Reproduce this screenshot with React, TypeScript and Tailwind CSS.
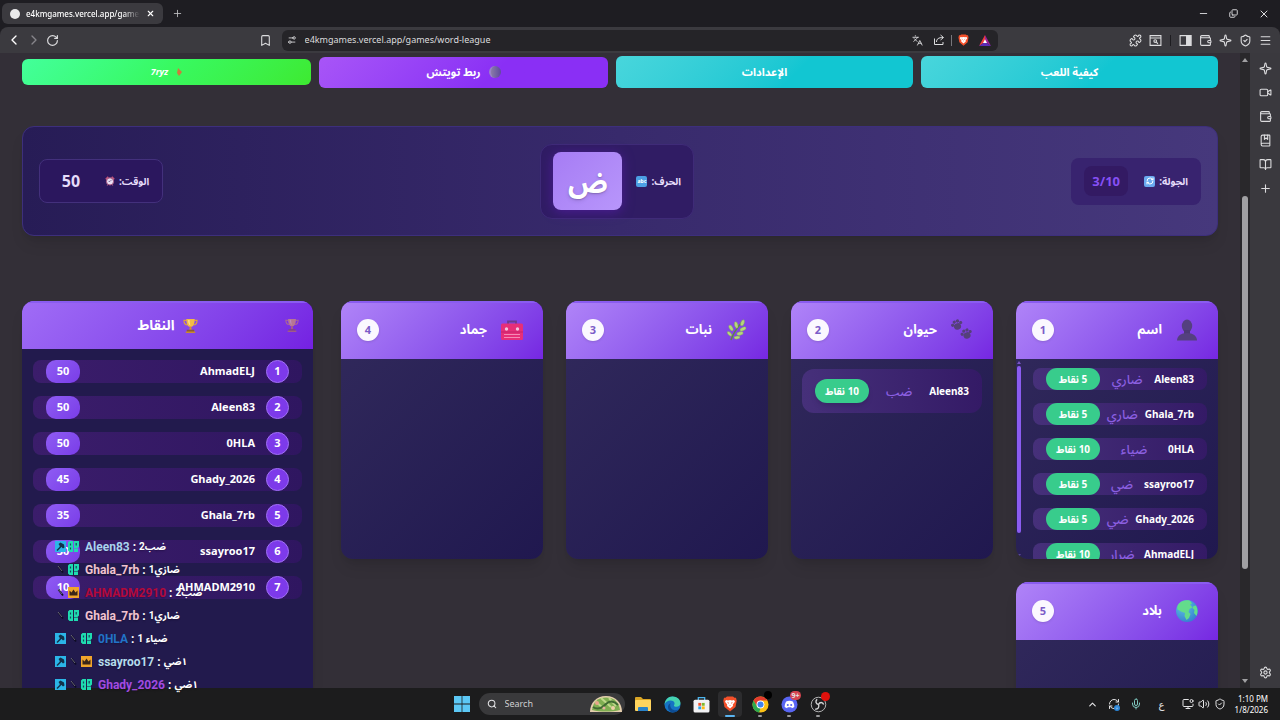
import React from 'react';
import {
  ArrowDown, BookOpen, Bookmark, BookMarked, ChevronLeft, ChevronRight, ChevronUp, Copy,
  Languages, Menu, Mic, Minus, PanelRight, Plus, Puzzle, RefreshCw, RotateCw, Search, Settings,
  Share, ShieldCheck, Sparkle, Video, Volume2, Wallet, X, MonitorDot, AppWindow, Settings2,
} from 'lucide-react';

type IconProps = { className?: string };

/* ---------- drawn icons ---------- */

const BustIcon = ({ className }: IconProps) => (
  <svg viewBox="0 0 22 22" className={className} aria-hidden="true">
    <ellipse cx="11" cy="7" rx="5.200" ry="6.500" fill="#54407f" />
    <path d="M8 11h6v5H8z" fill="#4c3a75" />
    <path d="M1 21.500c0-4.500 4-7.500 10-7.500s10 3 10 7.500z" fill="#54407f" />
  </svg>
);

const Paw = ({ x, y }: { x: number; y: number }) => (
  <g transform={`translate(${x} ${y}) rotate(-20)`} fill="#55407a">
    <ellipse cx="0" cy="1.500" rx="3.600" ry="3.200" />
    <circle cx="-4.200" cy="-1.200" r="1.600" />
    <circle cx="-1.600" cy="-3.600" r="1.600" />
    <circle cx="1.800" cy="-3.600" r="1.600" />
    <circle cx="4.300" cy="-1" r="1.600" />
  </g>
);

const PawsIcon = ({ className }: IconProps) => (
  <svg viewBox="0 0 22 22" className={className} aria-hidden="true">
    <Paw x={6} y={6} />
    <Paw x={15.500} y={15} />
  </svg>
);

const HerbIcon = ({ className }: IconProps) => (
  <svg viewBox="0 0 22 22" className={className} aria-hidden="true">
    <path d="M5 21C7 14 11 9 16 3" stroke="#5d8a3c" strokeWidth="1.300" fill="none" />
    <g fill="#b6d67c" stroke="#7fa653" strokeWidth=".4">
      <ellipse cx="16.500" cy="3.800" rx="1.700" ry="3.200" transform="rotate(20 16.500 3.800)" />
      <ellipse cx="10.200" cy="6" rx="1.700" ry="3.200" transform="rotate(-12 10.200 6)" />
      <ellipse cx="5" cy="9" rx="1.700" ry="3.200" transform="rotate(-30 5 9)" />
      <ellipse cx="3.500" cy="14.800" rx="1.500" ry="2.900" transform="rotate(-45 3.500 14.800)" />
      <ellipse cx="17" cy="10" rx="1.700" ry="3.300" transform="rotate(65 17 10)" />
      <ellipse cx="14" cy="14.500" rx="1.700" ry="3.300" transform="rotate(75 14 14.500)" />
      <ellipse cx="11" cy="18.600" rx="1.500" ry="3" transform="rotate(85 11 18.600)" />
    </g>
  </svg>
);

const ToolboxIcon = ({ className }: IconProps) => (
  <svg viewBox="0 0 22 22" className={className} aria-hidden="true">
    <path d="M7 5V2.500h8V5" stroke="#6b3d8e" strokeWidth="1.800" fill="none" />
    <rect x="0" y="4.500" width="22" height="16.500" rx="1.500" fill="#e62f78" />
    <path d="M0 13h22" stroke="#c4246a" strokeWidth="1" />
    <circle cx="5.500" cy="10" r="1.700" fill="#f3c3dd" />
    <circle cx="16.500" cy="10" r="1.700" fill="#f3c3dd" />
    <path d="M3 15.500h16M3 18.500h16" stroke="#f58ab5" strokeWidth="1" />
  </svg>
);

const GlobeIcon = ({ className }: IconProps) => (
  <svg viewBox="0 0 22 22" className={className} aria-hidden="true">
    <defs>
      <radialGradient id="sea" cx=".35" cy=".3" r=".8">
        <stop offset="0" stopColor="#5cc4e0" />
        <stop offset="1" stopColor="#3479d0" />
      </radialGradient>
    </defs>
    <circle cx="11" cy="11" r="11" fill="url(#sea)" />
    <path d="M3 3.500C6 .5 11-.3 14 .8l2 2.700-2 1 2.500 3-3 1.500-1 3 2 2-1.500 4-2.500 2-2-4 .5-3-4-1.500-3.500-2C1 7 1.500 5.500 3 3.500z" fill="#63dc8c" />
    <path d="M17.500 6l2.500-.5C22 9 22 13 20.500 16l-2.500-3 .5-3-2-2z" fill="#63dc8c" />
  </svg>
);

const TrophyIcon = ({ className }: IconProps) => (
  <svg viewBox="0 0 16 16" className={className} aria-hidden="true">
    <path d="M3.500 2.500H1c0 3.500 1.500 5 4 5M12.500 2.500H15c0 3.500-1.500 5-4 5" stroke="#e0a33a" strokeWidth="1.200" fill="none" />
    <path d="M3.500 1h9c0 5-1.500 8.500-4.500 8.500S3.500 6 3.500 1z" fill="#f3bc45" />
    <path d="M5.500 2h1.500c0 3 .3 4.500 1 6-1.700-.8-2.500-3-2.500-6z" fill="#ffe39a" />
    <path d="M7.200 9h1.600l.5 3.500H6.700z" fill="#d8932c" />
    <path d="M4 12.500h8V15H4z" fill="#8b5a34" />
    <path d="M3 14.500h10V16H3z" fill="#c98a32" />
  </svg>
);

const ClockIcon = ({ className }: IconProps) => (
  <svg viewBox="0 0 12 12" className={className} aria-hidden="true">
    <path d="M1 4L4 1M11 4L8 1" stroke="#c0527a" strokeWidth="2" />
    <circle cx="6" cy="6.500" r="4.300" fill="#eadff5" stroke="#a5557f" strokeWidth="1.200" />
    <path d="M6 6.500L8 4.500M6 6.500H4.300" stroke="#5b4a80" strokeWidth=".9" />
    <path d="M2.500 11.800l1-1.300M9.500 11.800l-1-1.300" stroke="#a5557f" strokeWidth="1" />
  </svg>
);

const WindowsIcon = ({ className }: IconProps) => (
  <svg viewBox="0 0 16 16" className={className} aria-hidden="true" fill="#5cc8f5">
    <path d="M0 0h7.600v7.600H0zM8.400 0H16v7.600H8.400zM0 8.400h7.600V16H0zM8.400 8.400H16V16H8.400z" />
  </svg>
);

const FolderIcon = ({ className }: IconProps) => (
  <svg viewBox="0 0 18 16" className={className} aria-hidden="true">
    <path d="M1 2a1 1 0 011-1h5l2 2h7a1 1 0 011 1v3H1z" fill="#d9a526" />
    <rect x="1" y="4" width="16" height="11" rx="1" fill="#ffd45e" />
    <path d="M4 15v-3a1 1 0 011-1h8a1 1 0 011 1v3z" fill="#2a83c9" />
  </svg>
);

const EdgeIcon = ({ className }: IconProps) => (
  <svg viewBox="0 0 18 18" className={className} aria-hidden="true">
    <circle cx="9" cy="9" r="8.500" fill="#1673c4" />
    <path d="M.6 9C1 4 4.500.5 9 .5c5 0 8.500 3.500 8.500 7 0 2.500-2 4-4.300 4-1.700 0-2.700-.7-2.700-1.400 0-.6.7-.9.7-2.200C11.200 6 9.300 4.800 7 4.800 3.800 4.800 1.200 6.700.6 9z" fill="#45d3b0" />
    <path d="M6.500 9.500c0 3.500 3 6 6.500 5.500 1.200-.2 2-.6 3-1.200-1.500 2.500-4 3.700-7 3.700C6 17 4 14 4.200 11.500 4.300 9.500 5.500 8 7.200 7.600c-.5.500-.7 1.200-.7 1.900z" fill="#0d4c94" />
  </svg>
);

const StoreIcon = ({ className }: IconProps) => (
  <svg viewBox="0 0 16 16" className={className} aria-hidden="true">
    <path d="M5 4V1.500h6V4" stroke="#4cb5ee" strokeWidth="1.200" fill="none" />
    <rect x=".5" y="3.500" width="15" height="12" rx="1.500" fill="#f1f1f3" />
    <path d="M5 6.500h2.700v2.700H5z" fill="#f0502c" />
    <path d="M8.300 6.500H11v2.700H8.300z" fill="#7eb92d" />
    <path d="M5 9.800h2.700v2.700H5z" fill="#2aa4e8" />
    <path d="M8.300 9.800H11v2.700H8.300z" fill="#fdb813" />
  </svg>
);

const BraveIcon = ({ className }: IconProps) => (
  <svg viewBox="0 0 14 16" className={className} aria-hidden="true">
    <path d="M4 .5h6l1.500 1.300L13 1.700l.7 3L12.500 11 7 15.500 1.500 11 .3 4.700l.7-3 1.500.1z" fill="#f4502a" />
    <path d="M3 4l2 .4L7 4l2 .4L11 4l1 1.800-2.200 2.700.2 1.400L7 12.500 4 9.900l.2-1.400L2 5.800z" fill="#fff" />
    <path d="M4 6.200l2 .6-.4.9zM10 6.200l-2 .6.4.9zM6.300 9h1.400L7 10z" fill="#f4502a" />
  </svg>
);

const ChromeIcon = ({ className }: IconProps) => (
  <svg viewBox="0 0 18 18" className={className} aria-hidden="true">
    <circle cx="9" cy="9" r="8.500" fill="#fbc116" />
    <path d="M1.600 4.800A8.500 8.500 0 0116.400 4.800H9L5.400 11z" fill="#e33b2e" />
    <path d="M1.600 4.800L5.400 11.200 9 13.200l-1.500 4.200A8.500 8.500 0 011.600 4.800z" fill="#2da94f" />
    <circle cx="9" cy="9" r="4.200" fill="#fff" />
    <circle cx="9" cy="9" r="3.200" fill="#3f83f0" />
  </svg>
);

const DiscordIcon = ({ className }: IconProps) => (
  <svg viewBox="0 0 18 18" className={className} aria-hidden="true">
    <circle cx="9" cy="9" r="8.500" fill="#5865f2" />
    <path d="M5.500 5.700C7.500 4.800 10.500 4.800 12.500 5.700c1 1.600 1.700 3.800 1.600 6-1 .8-1.900 1.100-2.600 1.200l-.6-1H7.100l-.6 1c-.7-.1-1.600-.4-2.600-1.200-.1-2.200.6-4.400 1.600-6z" fill="#fff" />
    <circle cx="7.200" cy="9.500" r="1.100" fill="#5865f2" />
    <circle cx="10.800" cy="9.500" r="1.100" fill="#5865f2" />
  </svg>
);

const ObsIcon = ({ className }: IconProps) => (
  <svg viewBox="0 0 18 18" className={className} aria-hidden="true">
    <circle cx="9" cy="9" r="7.700" fill="#1e1e20" stroke="#bdbdbd" strokeWidth="1" />
    <path d="M9 9C6 8.500 5.500 5.500 7.500 3.500M9 9c1.500-3 4.500-2.500 5.500 0M9 9c1.300 2.700-.5 5-3.500 5" stroke="#d4d4d4" strokeWidth="1.500" fill="none" />
  </svg>
);

const SaladIcon = ({ className }: IconProps) => (
  <svg viewBox="0 0 34 18" className={className} aria-hidden="true">
    <path d="M1 17C1 8 7 1 17 1s16 7 16 16z" fill="#e6cfae" />
    <path d="M3 15C4 7 9 2.500 17 2.500S30 7 31 15c-8 2-20 2-28 0z" fill="#7fae52" />
    <path d="M6 6l8 7M12 3l10 9M20 3l7 8" stroke="#bfd98a" strokeWidth="2" />
    <path d="M4 12c4 3 9 1 13-3s8-3 12 1" stroke="#3f6b32" strokeWidth="2" fill="none" />
    <circle cx="8" cy="8" r="2" fill="#e8a58a" />
    <circle cx="24" cy="13" r="2" fill="#efd0a8" />
    <circle cx="15" cy="13" r="1.500" fill="#e8b0a0" />
  </svg>
);

/* ---------- chat badges ---------- */

const HammerBadge = () => (
  <svg viewBox="0 0 11 11" className="size-[11px] shrink-0" aria-hidden="true">
    <path d="M0 0h11v11H0z" fill="#2bb5e8" />
    <path d="M2 9.500L5.500 6" stroke="#12314a" strokeWidth="1.400" />
    <path d="M3.500 3l2-1.500L9 3.500l.5 3L8 7.500 6.500 6 5 6.500 4.500 4.500z" fill="#12314a" />
  </svg>
);

const SwordBadge = () => (
  <svg viewBox="0 0 11 11" className="size-[11px] shrink-0" aria-hidden="true">
    <path d="M3.500 2.500L8 8.500" stroke="#0f0c25" strokeWidth="1.800" />
    <path d="M3 2l4 5" stroke="#7d7c86" strokeWidth=".8" />
  </svg>
);

const CoinBadge = () => (
  <svg viewBox="0 0 11 11" className="size-[11px] shrink-0" aria-hidden="true">
    <path d="M0 1.500L1.500 0H5v11H1.500L0 9.500zM6 0h5v5.500L9.500 7H6zM6 7.500h4V11H6z" fill="#1fdcb0" />
    <path d="M2.500 2.500v2M2.500 6.500v2M8.200 2v2.500" stroke="#14485c" strokeWidth="1.200" />
  </svg>
);

const CrownBadge = () => (
  <svg viewBox="0 0 11 11" className="size-[11px] shrink-0" aria-hidden="true">
    <path d="M0 0h11v11H0z" fill="#f0a52b" />
    <path d="M1.500 3.500l2 2 2-3 2 3 2-2V8.500h-8z" fill="#3c2618" />
  </svg>
);

const badges = { hammer: HammerBadge, sword: SwordBadge, coin: CoinBadge, crown: CrownBadge };

/* ---------- data ---------- */

type Answer = { name: string; word: string; points: number };

const nameAnswers: Answer[] = [
  { name: 'Aleen83', word: 'ضاري', points: 5 },
  { name: 'Ghala_7rb', word: 'ضاري', points: 5 },
  { name: '0HLA', word: 'ضياء', points: 10 },
  { name: 'ssayroo17', word: 'ضي', points: 5 },
  { name: 'Ghady_2026', word: 'ضي', points: 5 },
  { name: 'AhmadELJ', word: 'ضرار', points: 10 },
];

const categories: { title: string; Icon: React.FC<IconProps>; answers: Answer[] }[] = [
  { title: 'اسم', Icon: BustIcon, answers: nameAnswers },
  { title: 'حيوان', Icon: PawsIcon, answers: [{ name: 'Aleen83', word: 'ضب', points: 10 }] },
  { title: 'نبات', Icon: HerbIcon, answers: [] },
  { title: 'جماد', Icon: ToolboxIcon, answers: [] },
  { title: 'بلاد', Icon: GlobeIcon, answers: [] },
];

const scores = [
  { name: 'AhmadELJ', points: 50 },
  { name: 'Aleen83', points: 50 },
  { name: '0HLA', points: 50 },
  { name: 'Ghady_2026', points: 45 },
  { name: 'Ghala_7rb', points: 35 },
  { name: 'ssayroo17', points: 30 },
  { name: 'AHMADM2910', points: 10 },
];

const chat: { icons: (keyof typeof badges)[]; name: string; color: string; text: string }[] = [
  { icons: ['hammer', 'coin'], name: 'Aleen83', color: 'text-[#a9d3ee]', text: 'ضب2' },
  { icons: ['sword', 'coin'], name: 'Ghala_7rb', color: 'text-[#f0c3cf]', text: 'ضازي1' },
  { icons: ['sword', 'crown'], name: 'AHMADM2910', color: 'text-[#b3093a]', text: 'ضب2' },
  { icons: ['sword', 'coin'], name: 'Ghala_7rb', color: 'text-[#f0c3cf]', text: 'ضاري1' },
  { icons: ['hammer', 'sword', 'coin'], name: '0HLA', color: 'text-[#2273c8]', text: 'ضياء 1' },
  { icons: ['hammer', 'sword', 'crown'], name: 'ssayroo17', color: 'text-[#b5dcec]', text: '١ضي' },
  { icons: ['hammer', 'sword', 'coin'], name: 'Ghady_2026', color: 'text-[#a24be0]', text: '١ضي' },
];

/* ---------- browser ---------- */

function TabBar() {
  return (
    <div className="flex h-[27px] shrink-0 items-center bg-[#1e1d22] pl-[2px]">
      <div className="flex h-[21px] w-[161px] items-center gap-[6px] rounded-md bg-[#3b3a3f] px-2">
        <span className="size-[10px] shrink-0 rounded-full bg-[#e9e9ea]" />
        <span className="flex-1 overflow-hidden whitespace-nowrap text-[8px] font-medium text-white [mask-image:linear-gradient(to_right,black_85%,transparent)]">
          e4kmgames.vercel.app/games/w
        </span>
        <button aria-label="Close tab"><X className="size-[9px] text-white" strokeWidth={3} /></button>
      </div>
      <button aria-label="New tab" className="ml-[9px]"><Plus className="size-[11px] text-[#c4c4c6]" strokeWidth={1.800} /></button>
      <div className="ml-auto flex items-center gap-5 pr-[10px] text-[#dcdcde]">
        <button aria-label="Minimize"><Minus className="size-[11px]" strokeWidth={2} /></button>
        <button aria-label="Restore"><Copy className="size-[9px] -scale-y-100" strokeWidth={2.500} /></button>
        <button aria-label="Close"><X className="size-[12px]" strokeWidth={2} /></button>
      </div>
    </div>
  );
}

function Toolbar() {
  return (
    <div className="flex h-[26px] shrink-0 items-center bg-[#1e1d22] text-[#dcdcde]">
      <div className="flex h-full w-full items-center rounded-t-lg bg-[#3b3a3f]">
        <div className="flex w-[22%] items-center gap-1 pl-[6px] pr-[10px]">
          <button aria-label="Back"><ChevronLeft className="size-4 text-white" strokeWidth={2} /></button>
          <button aria-label="Forward"><ChevronRight className="size-4 text-[#86858a]" strokeWidth={2} /></button>
          <button aria-label="Reload"><RotateCw className="size-[13px]" strokeWidth={2.200} /></button>
          <button aria-label="Bookmark" className="ml-auto"><Bookmark className="size-[13px]" strokeWidth={2} /></button>
        </div>
        <div className="flex h-[21px] w-[56%] items-center gap-2 rounded-md bg-[#252428] px-[5px]">
          <Settings2 className="size-[10px] -scale-x-100" strokeWidth={2} />
          <input
            aria-label="Address"
            readOnly
            value="e4kmgames.vercel.app/games/word-league"
            className="min-w-0 flex-1 bg-transparent text-[9px] text-[#dcdcde] outline-none"
          />
          <div className="flex items-center gap-[10px] pr-[2px]">
            <button aria-label="Translate"><Languages className="size-[11px]" /></button>
            <button aria-label="Share">
              <svg viewBox="0 0 24 24" className="size-3" fill="none" stroke="currentColor" strokeWidth="2" aria-hidden="true">
                <path d="M3 9v12h17v-5M7 16c0-6 4-9 13-9M15 2l6 5-6 5" />
              </svg>
            </button>
            <span className="-mx-1 h-[11px] w-px bg-[#77767b]" />
            <button aria-label="Shields"><BraveIcon className="h-3 w-[11px]" /></button>
            <button aria-label="Rewards">
              <svg viewBox="0 0 12 11" className="h-[11px] w-3" aria-hidden="true">
                <path d="M6 0v7L0 11z" fill="#ee3b3b" />
                <path d="M6 0v7l6 4z" fill="#9b2196" />
                <path d="M0 11h12L6 7z" fill="#5c2bb8" />
                <path d="M6 4.200L8 8H4z" fill="#fff" />
              </svg>
            </button>
          </div>
        </div>
        <div className="flex w-[22%] items-center justify-end gap-[7px] pr-2">
          <button aria-label="Extensions"><Puzzle className="size-[13px]" /></button>
          <button aria-label="Search page">
            <svg viewBox="0 0 24 24" className="size-[13px]" fill="none" stroke="currentColor" strokeWidth="2" aria-hidden="true">
              <path d="M2 3h20v18H2zM2 7.500h20" />
              <circle cx="11.500" cy="13" r="2.500" />
              <path d="M13.500 15l3 3" />
            </svg>
          </button>
          <span className="mx-px h-[11px] w-px bg-[#1d1c20]" />
          <button aria-label="Side panel">
            <svg viewBox="0 0 24 24" className="size-[13px]" fill="none" stroke="currentColor" strokeWidth="2" aria-hidden="true">
              <path d="M2 3h20v18H2z" />
              <path d="M14 3h8v18h-8z" fill="currentColor" />
            </svg>
          </button>
          <button aria-label="Wallet"><Wallet className="size-[13px]" /></button>
          <button aria-label="Assistant"><Sparkle className="size-[13px]" /></button>
          <button aria-label="VPN"><ShieldCheck className="size-[13px]" /></button>
          <button aria-label="Menu"><Menu className="size-[13px]" /></button>
        </div>
      </div>
    </div>
  );
}

function PageScrollbar() {
  return (
    <div className="flex w-[10px] shrink-0 flex-col items-center bg-[#29282b] py-[5px]">
      <span className="border-x-[3px] border-b-4 border-transparent border-b-[#a0a0a2]" />
      <span className="flex-[134]" />
      <span className="w-[6px] flex-[373] rounded-full bg-[#a0a0a2]" />
      <span className="flex-[110]" />
      <span className="border-x-[3px] border-t-4 border-transparent border-t-[#a0a0a2]" />
    </div>
  );
}

function SidePanel() {
  return (
    <div className="flex w-[30px] shrink-0 flex-col items-center gap-[11px] bg-[#3a393e] py-[9px] text-[#dcdcde]">
      <button aria-label="Assistant"><Sparkle className="size-[13px]" /></button>
      <button aria-label="Talk"><Video className="size-[13px]" /></button>
      <button aria-label="Wallet"><Wallet className="size-[13px]" /></button>
      <button aria-label="Bookmarks"><BookMarked className="size-[13px]" /></button>
      <button aria-label="Reading list"><BookOpen className="size-[13px]" /></button>
      <button aria-label="Add"><Plus className="size-[13px]" /></button>
      <button aria-label="Settings" className="mt-auto"><Settings className="size-[13px]" /></button>
    </div>
  );
}

/* ---------- game page ---------- */

function ActionButtons() {
  return (
    <div className="grid grid-cols-[297fr_297fr_289fr_289fr] items-center gap-2 text-[11px] font-bold text-white">
      <button className="h-8 rounded-md bg-linear-135 from-[#48d6dc] to-[#12c6d2] to-60%">كيفية اللعب</button>
      <button className="h-8 rounded-md bg-linear-135 from-[#48d6dc] to-[#12c6d2] to-60%">الإعدادات</button>
      <button className="flex h-[31px] items-center justify-center gap-2 rounded-md bg-linear-135 from-[#a855f7] to-[#8a2ff5] to-60%">
        <span className="size-3 rounded-full border-l-2 border-[#9a83c9] bg-linear-to-r from-[#8a7aa8] to-[#5f4a9c]" />
        ربط تويتش
      </button>
      <a href="#7ryz" className="flex h-[26px] items-center justify-center gap-2 rounded-md bg-linear-135 from-[#43ff9a] via-[#38f960] to-[#3eea30] text-[9px] italic">
        <svg viewBox="0 0 6 8" className="h-2 w-[6px]" aria-hidden="true">
          <path d="M2 0l4 4-3 4-2-3z" fill="#cf7a3c" />
        </svg>
        7ryz
      </a>
    </div>
  );
}

function StatusBar() {
  return (
    <div className="mt-[38px] flex h-[110px] items-center justify-between rounded-xl border border-[#3d2f7c] bg-linear-to-r from-[#271c56] via-[#382a6c] to-[#46387c] px-4 text-[10px] font-bold text-[#e5dcfa] shadow-lg">
      <div className="flex h-[47px] items-center gap-4 rounded-lg bg-[#38236f] px-[13px]">
        <span className="flex items-center gap-1">
          الجولة:
          <span className="flex size-[11px] items-center justify-center rounded-xs bg-[#6aaaf0]">
            <RefreshCw className="size-2 text-white" strokeWidth={3} />
          </span>
        </span>
        <span dir="ltr" className="w-11 rounded-lg bg-[#331a63] py-1 text-center text-[13px] leading-[22px] text-[#8650f5]">3/10</span>
      </div>
      <div className="flex h-[75px] items-center gap-[14px] rounded-xl border border-[#3f2b78] bg-[#301c64] px-3">
        <span className="flex items-center gap-1">
          الحرف:
          <span className="flex size-[11px] items-center justify-center rounded-xs bg-[#4c9fe4] text-[5px] leading-none text-white">abc</span>
        </span>
        <span className="flex h-[58px] w-[69px] items-center justify-center rounded-lg bg-linear-135 from-[#a67cf4] to-[#b896fb] text-[28px] leading-none text-white shadow-[0_2px_12px_#4c1d95] text-shadow-md">ض</span>
      </div>
      <div className="flex h-11 items-center gap-4 rounded-lg border border-[#43307c] bg-[#2b175e] px-[13px]">
        <span className="flex items-center gap-1">
          الوقت:
          <ClockIcon className="size-[10px]" />
        </span>
        <span className="w-9 text-center text-base">50</span>
      </div>
    </div>
  );
}

function AnswerRow({ answer, compact }: { answer: Answer; compact: boolean }) {
  return (
    <li
      className={`flex shrink-0 items-center justify-between bg-linear-to-r from-[#46307a] to-[#341a66] px-[13px] ${
        compact ? 'h-[22px] rounded-lg' : 'h-11 rounded-xl'
      }`}
    >
      <span className="text-[10px] font-bold text-white">{answer.name}</span>
      <span className="text-[13px] font-medium leading-[22px] text-[#8b5fe0]">{answer.word}</span>
      <span
        className={`flex w-[54px] items-center justify-center rounded-full bg-[#38cc8c] text-[10px] font-bold text-white ${
          compact ? 'h-[22px]' : 'h-6 shadow-md'
        }`}
      >
        {answer.points} نقاط
      </span>
    </li>
  );
}

function CategoryCard({ index }: { index: number }) {
  const { title, Icon, answers } = categories[index];
  const scrolls = answers.length > 4;

  return (
    <section className="flex h-[258px] flex-col overflow-hidden rounded-xl bg-linear-135 from-[#322a5c] to-[#20184f] shadow-lg">
      <header className="flex h-[58px] shrink-0 items-center bg-linear-135 from-[#b084f8] to-[#7626e2] pr-5 pl-4 shadow-[inset_0_2px_0_#8a5cf0]">
        <Icon className="size-[22px]" />
        <h2 className="mr-[14px] text-[13px] font-bold text-white">{title}</h2>
        <span className="mr-auto flex size-[22px] items-center justify-center rounded-full bg-[#fbf8ff] text-[11px] font-bold text-[#7c5cc8] shadow">
          {index + 1}
        </span>
      </header>
      <div className="flex min-h-0 flex-1">
        <ul className={`flex flex-1 flex-col gap-[13px] overflow-hidden px-[11px] ${scrolls ? 'pt-[9px]' : 'pt-[10px]'}`}>
          {answers.map((answer) => (
            <AnswerRow key={answer.name} answer={answer} compact={scrolls} />
          ))}
        </ul>
        {scrolls && (
          <div className="flex w-[6px] flex-col items-center pt-[2px] pb-[2px]">
            <span className="border-x-2 border-b-3 border-transparent border-b-[#7a55c8]" />
            <span className="mt-[2px] w-1 flex-[165] rounded-full bg-[#8b5cf0]" />
            <span className="flex-[21]" />
            <span className="border-x-2 border-t-3 border-transparent border-t-[#5a4798]" />
          </div>
        )}
      </div>
    </section>
  );
}

function ScorePanel() {
  return (
    <section className="w-[291px] shrink-0 overflow-hidden rounded-t-xl bg-[#221a4d] shadow-lg">
      <header className="relative flex h-12 items-center justify-center gap-2 bg-linear-135 from-[#a06cf6] to-[#7420e2] text-sm font-bold text-white shadow-[inset_0_2px_0_#8a5cf0]">
        <TrophyIcon className="absolute right-[14px] size-[14px] opacity-50" />
        <TrophyIcon className="size-[15px]" />
        <h2>النقاط</h2>
      </header>
      <ol className="flex flex-col gap-[13px] px-[11px] pt-[11px]">
        {scores.map((score, i) => (
          <li key={score.name} className="flex h-[23px] items-center rounded-lg bg-linear-to-r from-[#3b1d6b] to-[#2f1660] px-[13px] text-[11px] font-bold text-white">
            <span className="flex size-[23px] items-center justify-center rounded-full border border-[#a070f5] bg-[#7d3aea]">{i + 1}</span>
            <span className="mr-[11px]">{score.name}</span>
            <span className="mr-auto flex h-[23px] w-[34px] items-center justify-center rounded-[10px] bg-linear-135 from-[#8f5cf3] to-[#7a3ce8]">{score.points}</span>
          </li>
        ))}
      </ol>
    </section>
  );
}

function GamePage() {
  return (
    <main dir="rtl" className="flex min-w-0 flex-1 flex-col overflow-hidden bg-[#332f37] px-[22px] pt-[3px] font-['Noto_Sans','Noto_Sans_Arabic','DejaVu_Sans',sans-serif]">
      <ActionButtons />
      <StatusBar />
      <div className="mt-[65px] flex min-h-0 flex-1 gap-7">
        <div className="grid flex-1 grid-cols-4 content-start gap-[23px]">
          {categories.map((category, i) => (
            <CategoryCard key={category.title} index={i} />
          ))}
        </div>
        <ScorePanel />
      </div>
    </main>
  );
}

/* ---------- stream chat overlay ---------- */

function ChatOverlay() {
  return (
    <ul className="absolute bottom-6 left-[55px] font-[Roboto,'Noto_Sans_Arabic','DejaVu_Sans',sans-serif] text-xs font-bold text-white">
      {chat.map((line, i) => (
        <li key={i} className="flex h-[23px] items-center gap-[2px] whitespace-nowrap text-shadow-sm">
          {line.icons.map((icon) => {
            const Badge = badges[icon];
            return <Badge key={icon} />;
          })}
          <span className={`ml-1 ${line.color}`}>{line.name}</span>
          <span className="px-px">:</span>
          <bdi dir="rtl" className="text-[10px]">{line.text}</bdi>
        </li>
      ))}
    </ul>
  );
}

/* ---------- taskbar ---------- */

function Taskbar() {
  return (
    <footer className="grid h-8 shrink-0 grid-cols-[1fr_auto_1fr] items-center bg-[#1c1c1d] text-[#e4e4e6]">
      <span />
      <div className="flex items-center gap-3">
        <button aria-label="Start"><WindowsIcon className="size-4" /></button>
        <label className="-mx-[3px] flex h-[22px] w-[146px] items-center gap-2 rounded-full bg-[#39393b] pl-2 pr-[2px]">
          <Search className="size-[10px]" strokeWidth={2.500} />
          <input type="text" aria-label="Search" placeholder="Search" className="w-0 flex-1 bg-transparent text-[9px] outline-none placeholder:text-[#cfcfd1]" />
          <SaladIcon className="h-[18px] w-[34px]" />
        </label>
        <button aria-label="File Explorer"><FolderIcon className="h-4 w-[18px]" /></button>
        <button aria-label="Edge"><EdgeIcon className="size-[17px]" /></button>
        <button aria-label="Store"><StoreIcon className="size-[17px]" /></button>
        <button aria-label="Brave" className="relative -ml-1 -mr-[2px] flex h-[26px] w-6 items-center justify-center rounded-sm bg-[#2c2c2e]">
          <BraveIcon className="h-4 w-[14px]" />
          <span className="absolute bottom-0 h-[2px] w-[10px] rounded-full bg-[#5ab4f0]" />
        </button>
        <button aria-label="Chrome" className="relative flex h-[26px] items-center">
          <ChromeIcon className="size-[17px]" />
          <span className="absolute -right-[3px] top-0 size-2 rounded-full bg-black" />
          <span className="absolute bottom-0 left-[6px] h-[2px] w-1 rounded-full bg-[#9b9b9d]" />
        </button>
        <button aria-label="Discord" className="relative flex h-[26px] items-center">
          <DiscordIcon className="size-[17px]" />
          <span className="absolute -right-[3px] top-0 flex h-[9px] items-center rounded-full bg-[#d6454f] px-px text-[7px] font-bold leading-none">9+</span>
          <span className="absolute bottom-0 left-[6px] h-[2px] w-1 rounded-full bg-[#9b9b9d]" />
        </button>
        <button aria-label="OBS Studio" className="relative flex h-[26px] items-center">
          <ObsIcon className="size-[17px]" />
          <span className="absolute -right-[3px] top-px size-[9px] rounded-full bg-[#e0110c]" />
          <span className="absolute bottom-0 left-[6px] h-[2px] w-1 rounded-full bg-[#9b9b9d]" />
        </button>
      </div>
      <div className="flex items-center justify-end pr-3">
        <button aria-label="Hidden icons"><ChevronUp className="size-[11px]" strokeWidth={2.500} /></button>
        <button aria-label="Updates" className="relative ml-[10px]">
          <RefreshCw className="size-3" />
          <span className="absolute -bottom-px right-0 flex size-[6px] items-center justify-center rounded-full bg-[#2a86d8]">
            <ArrowDown className="size-1" />
          </span>
        </button>
        <button aria-label="Microphone" className="ml-[10px]"><Mic className="size-3 text-[#7fc9c0]" /></button>
        <span className="ml-[17px] font-['DejaVu_Sans'] text-[10px]">ع</span>
        <button aria-label="Display" className="ml-[17px]"><MonitorDot className="size-3" /></button>
        <button aria-label="Volume" className="ml-1"><Volume2 className="size-3" /></button>
        <button aria-label="Security" className="ml-1"><ShieldCheck className="size-3" /></button>
        <div className="ml-[9px] text-right text-[8px] leading-[11px] text-white">
          <div>1:10 PM</div>
          <div>1/8/2026</div>
        </div>
      </div>
    </footer>
  );
}

export default function App() {
  return (
    <div className="relative flex h-screen flex-col overflow-hidden bg-[#1c1c1d] font-['Noto_Sans','DejaVu_Sans',sans-serif]">
      <TabBar />
      <Toolbar />
      <div className="flex min-h-0 flex-1">
        <GamePage />
        <PageScrollbar />
        <SidePanel />
      </div>
      <Taskbar />
      <ChatOverlay />
    </div>
  );
}
